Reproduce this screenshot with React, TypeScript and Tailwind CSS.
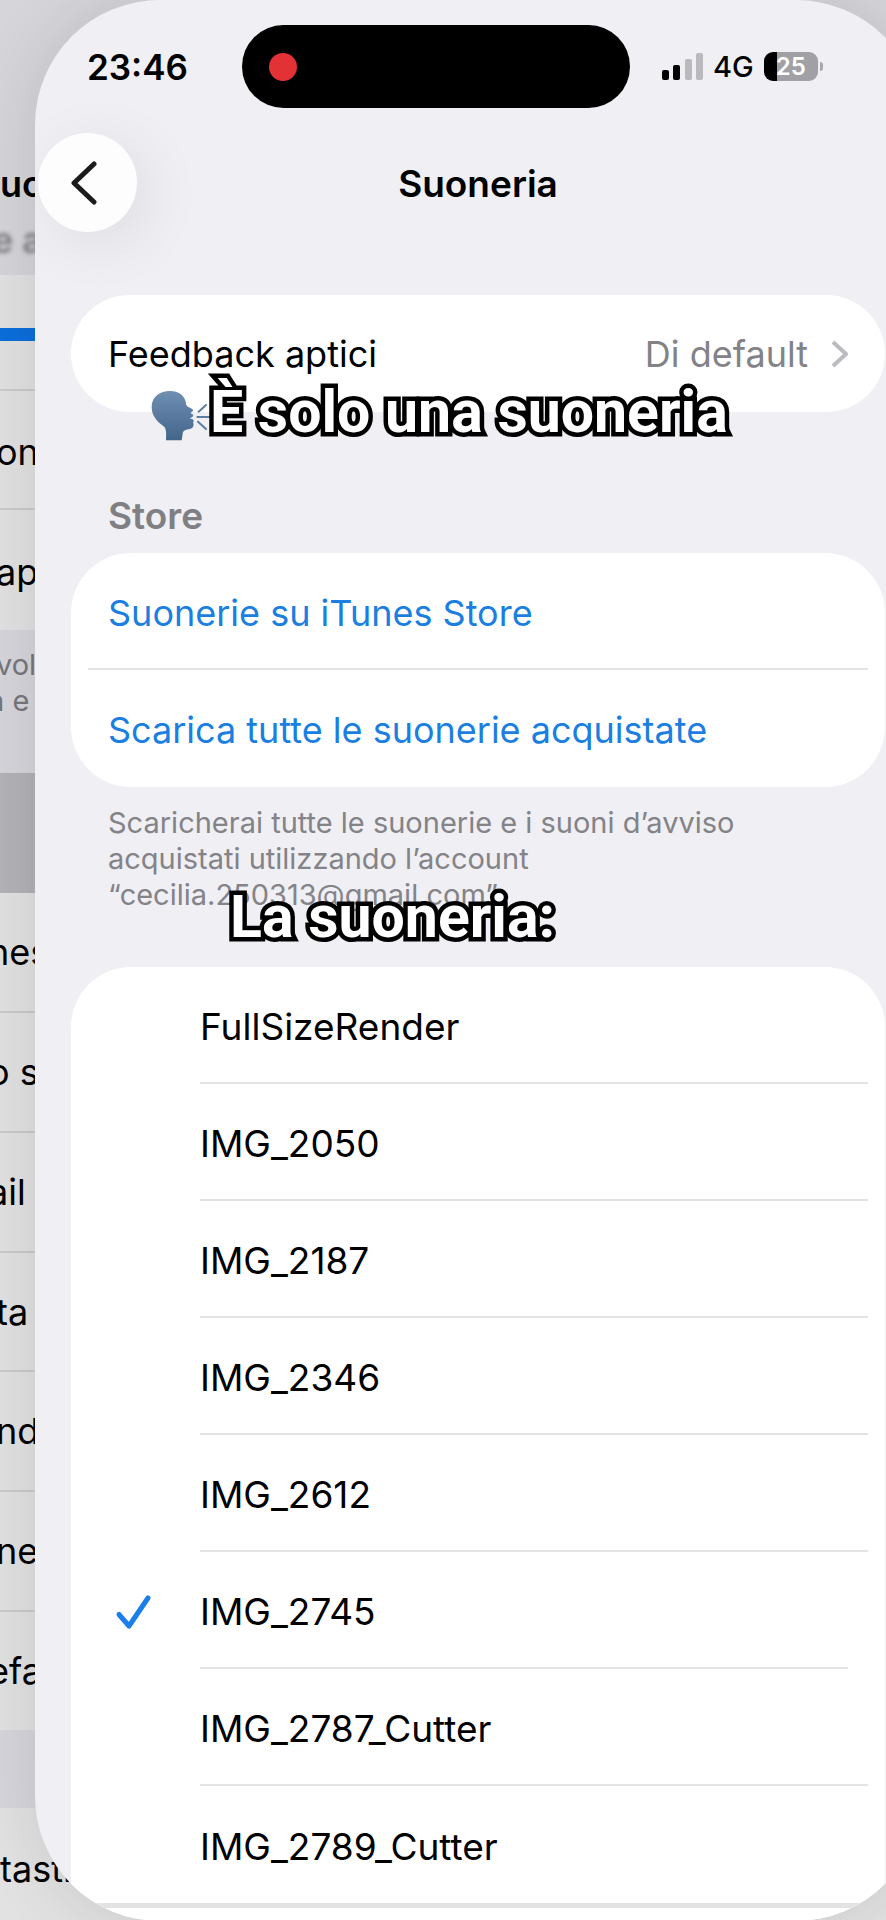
import { useState } from "react";
import clsx from "clsx";

const RINGTONES = [
  "FullSizeRender",
  "IMG_2050",
  "IMG_2187",
  "IMG_2346",
  "IMG_2612",
  "IMG_2745",
  "IMG_2787_Cutter",
  "IMG_2789_Cutter",
];

const PREVIOUS_ROWS = [
  { text: "nes", narrow: false },
  { text: "o se", narrow: false },
  { text: "ail", narrow: false },
  { text: "ta", narrow: true },
  { text: "nd", narrow: true },
  { text: "ne", narrow: true },
  { text: "efa", narrow: false },
];

const CAPTION_CLASS =
  "font-[Roboto,sans-serif] text-[59px] leading-[64px] font-bold whitespace-nowrap text-white [-webkit-text-stroke:9px_black] [paint-order:stroke_fill] [stroke-linejoin:round]";

function PreviousPage() {
  return (
    <div
      aria-hidden="true"
      className="col-start-1 row-start-1 flex flex-col overflow-hidden bg-[#e2e2e2] text-[36px] leading-[44px] text-black"
    >
      <div className="h-[275px] bg-[#d6d6da] pt-[162px]">
        <p className="font-semibold">uo</p>
        <p className="-ml-2 pt-3 font-semibold text-[#808084] blur-[2px]">e a</p>
      </div>
      <div className="flex h-[116px] flex-col justify-center border-b-2 border-[#cbcbcd] pt-1">
        <div className="h-[13px] bg-[#0b6fdc]" />
      </div>
      <div className="-ml-1 flex h-[119px] items-center border-b-2 border-[#cbcbcd] pt-1">on</div>
      <div className="-ml-1 flex h-[120px] items-center pt-1">ap</div>
      <div className="h-[143px] bg-[#d6d6dc] pt-[17px] text-[29px] leading-[36px] text-[#77777c]">
        <p className="-ml-1">vol</p>
        <p className="-ml-3">a e</p>
      </div>
      <div className="h-[120px] bg-[#b3b3b8]" />
      <div className="flex h-[837px] flex-col">
        {PREVIOUS_ROWS.map(({ text, narrow }) => (
          <div
            key={text}
            className={clsx(
              "flex flex-1 items-center border-b-2 border-[#cbcbcd] whitespace-nowrap last:border-b-0",
              narrow ? "-ml-1" : "-ml-3"
            )}
          >
            {text}
          </div>
        ))}
      </div>
      <div className="h-[78px] bg-[#d6d6dc]" />
      <div className="pt-[39px]">tasti.</div>
    </div>
  );
}

function SignalBars() {
  return (
    <svg width="41" height="28" viewBox="0 0 41 28" role="img" aria-label="Segnale">
      <rect x="0" y="17" width="7" height="10" rx="2" fill="#000" />
      <rect x="11" y="12" width="7" height="15" rx="2" fill="#000" />
      <rect x="23" y="6" width="7" height="21" rx="2" fill="#b9b9be" />
      <rect x="34" y="0" width="7" height="27" rx="2" fill="#b9b9be" />
    </svg>
  );
}

function StatusBar() {
  return (
    <div className="grid grid-cols-[155px_1fr_291px] items-center pt-[25px] pl-[52px]">
      <span className="text-[35px] leading-[44px] font-semibold">23:46</span>
      <div className="flex h-[83px] items-center rounded-full bg-black pl-[27px]">
        <span className="size-[28px] rounded-full bg-[#e23236]" />
      </div>
      <div className="flex items-center pl-[32px]">
        <SignalBars />
        <span className="ml-[10px] text-[29px] leading-[32px] font-medium">4G</span>
        <div className="ml-[10px] flex h-[29px] w-[54px] items-center justify-center rounded-[9px] bg-linear-to-r from-black from-25% to-[#a1a1a5] to-25% text-[24px] leading-[28px] font-semibold text-white">
          25
        </div>
        <span className="ml-[2px] h-[9px] w-[3px] rounded-r-full bg-[#a9a9ad]" />
      </div>
    </div>
  );
}

function RingtoneRow({
  name,
  checked,
  onSelect,
}: {
  name: string;
  checked: boolean;
  onSelect: (name: string) => void;
}) {
  return (
    <label className="group flex h-[117px] cursor-pointer items-stretch text-[37px]">
      <input
        type="radio"
        name="ringtone"
        value={name}
        checked={checked}
        onChange={() => onSelect(name)}
        className="sr-only"
      />
      <span className="flex w-[129px] shrink-0 items-center pt-1 pl-[44px]">
        {checked && (
          <svg width="38" height="38" viewBox="0 0 38 38" fill="none" aria-hidden="true">
            <path
              d="M4 20.500 14 32 33 4"
              stroke="#1a7fe8"
              strokeWidth="5"
              strokeLinecap="round"
              strokeLinejoin="round"
            />
          </svg>
        )}
      </span>
      <span
        className={clsx(
          "flex flex-1 items-center border-b-2 border-[#e3e3e4] pt-1 group-last:border-b-0",
          checked ? "mr-[37px]" : "mr-[17px]"
        )}
      >
        {name}
      </span>
    </label>
  );
}

function SpeakingHead() {
  return (
    <svg
      className="mt-2"
      width="60"
      height="54"
      viewBox="60 54 180 162"
      fill="none"
      aria-hidden="true"
    >
      <defs>
        <linearGradient id="head" x1="0" y1="60" x2="0" y2="208" gradientUnits="userSpaceOnUse">
          <stop stopColor="#6f8fb3" />
          <stop offset="1" stopColor="#44658a" />
        </linearGradient>
      </defs>
      <path
        d="M108 208C109 190 110 174 101 166 79 151 64 131 65 106 66 77 90 60 120 60c30 0 47 17 49 42 3 6 9 7 16 11 6 3 6 7-1 10l-2 4 8 4-2 6-9 5 9 3c5 3 3 7 1 9 4 9 1 18-9 20-14 2-20 4-22 14l-3 20Z"
        fill="url(#head)"
      />
      <path
        d="m206 122 22-20M202 138h36M204 152l24 22"
        stroke="#5b7ca3"
        strokeWidth="6"
        strokeLinecap="round"
      />
    </svg>
  );
}

function RingtoneSheet() {
  const [selected, setSelected] = useState("IMG_2745");

  return (
    <main className="z-10 col-start-1 row-start-1 -mr-[35px] ml-[35px] flex flex-col overflow-hidden rounded-[125px] bg-[#efeff4] text-[36px] leading-[44px] text-black shadow-[0_0_70px_rgba(0,0,0,0.12)]">
      <StatusBar />

      <header className="mt-[25px] grid grid-cols-[1fr_auto_1fr] items-center px-[3px]">
        <button
          type="button"
          aria-label="Indietro"
          className="flex size-[99px] items-center justify-center rounded-full bg-[#fdfdfe] pr-2 shadow-[12px_12px_60px_rgba(0,0,0,0.08)]"
        >
          <svg width="28" height="44" viewBox="0 0 28 44" fill="none" aria-hidden="true">
            <path
              d="M24 3 4 22 24 41"
              stroke="#1b1b1d"
              strokeWidth="5"
              strokeLinecap="round"
              strokeLinejoin="round"
            />
          </svg>
        </button>
        <h1 className="pt-[2px] text-[37px] font-semibold">Suoneria</h1>
      </header>

      <div className="px-[36px] pt-[63px]">
        <button
          type="button"
          className="flex h-[117px] w-full items-center rounded-full bg-white px-[37px]"
        >
          <span>Feedback aptici</span>
          <span className="ml-auto text-[#838387]">Di default</span>
          <svg className="ml-[23px]" width="17" height="28" viewBox="0 0 17 28" fill="none" aria-hidden="true">
            <path d="M2 2 15 14 2 26" stroke="#bcbcc0" strokeWidth="4" strokeLinejoin="round" />
          </svg>
        </button>

        <h2 className="mt-[82px] pl-[37px] text-[37px] font-semibold text-[#7f7f84]">Store</h2>
        <div className="mt-[15px] rounded-[60px] bg-white text-[#1a7fe0]">
          <a href="#itunes" className="flex h-[117px] items-center pt-[2px] pl-[37px]">
            Suonerie su iTunes Store
          </a>
          <hr className="-mt-[2px] mr-[17px] ml-[17px] border-t-2 border-[#e3e3e4]" />
          <a href="#scarica" className="flex h-[117px] items-center pt-[2px] pl-[37px]">
            Scarica tutte le suonerie acquistate
          </a>
        </div>
        <p className="mt-[18px] pl-[37px] text-[29px] leading-[36px] text-[#838388]">
          Scaricherai tutte le suonerie e i suoni d’avviso
          <br />
          acquistati utilizzando l’account
          <br />
          “cecilia.250313@gmail.com”
        </p>

        <fieldset className="mt-[54px] rounded-t-[60px] bg-white">
          <legend className="sr-only">Suonerie</legend>
          {RINGTONES.map((name) => (
            <RingtoneRow
              key={name}
              name={name}
              checked={name === selected}
              onSelect={setSelected}
            />
          ))}
        </fieldset>
      </div>
      <div className="flex-1 border-t-5 border-[#e3e3e4] bg-white pb-[13px]" />
    </main>
  );
}

export default function App() {
  return (
    <div className="relative grid min-h-screen grid-cols-1 overflow-hidden font-[Inter,sans-serif]">
      <PreviousPage />
      <RingtoneSheet />
      <p className={clsx("absolute top-[380px] left-[150px] z-20 flex items-center", CAPTION_CLASS)}>
        <SpeakingHead />
        <span>È solo una suoneria</span>
      </p>
      <p className={clsx("absolute top-[885px] left-[230px] z-20", CAPTION_CLASS)}>La suoneria:</p>
    </div>
  );
}
